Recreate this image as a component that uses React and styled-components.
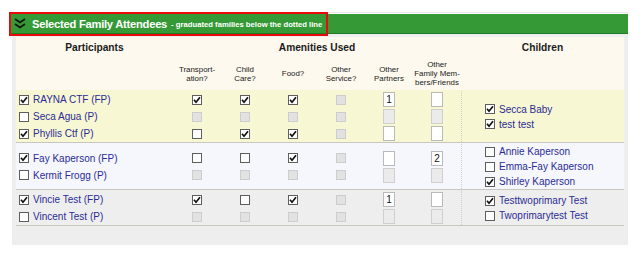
import styled, { createGlobalStyle } from "styled-components";

const GlobalStyle = createGlobalStyle`
  body {
    margin: 0;
    background: #fff;
    font-family: "Liberation Sans", Arial, sans-serif;
  }
`;

const COLS = "157px repeat(6, 48px)";

const Page = styled.div`
  padding: 12px 13px 0 10px;
  width: 618px;
`;

const Section = styled.section`
  position: relative;
`;

const TopRule = styled.div`
  height: 1px;
  background: #e6e6e6;
  margin-bottom: 1px;
`;

const Bar = styled.div`
  height: 19px;
  background: #359a35;
  border-bottom: 1px solid #237a25;
  display: flex;
  align-items: center;
  padding-left: 4px;
  color: #fff;
  white-space: nowrap;
`;

const Title = styled.span`
  margin-left: 6px;
  font-weight: bold;
  font-size: 11.2px;
  letter-spacing: -0.25px;
`;

const Subtitle = styled.span`
  margin-left: 4px;
  font-weight: bold;
  font-size: 7.7px;
  padding-top: 2px;
`;

const Highlight = styled.div`
  position: absolute;
  left: -1px;
  top: 0;
  width: 319px;
  height: 24px;
  box-sizing: border-box;
  border: 2px solid #ea0a0a;
  pointer-events: none;
`;

const Panel = styled.div`
  margin-left: 2px;
  background: #eeeeee;
  padding: 3px 4px 19px 4px;
`;

const Table = styled.div`
  width: 608px;
  background: #fdf9ee;
`;

const HeadRow = styled.div`
  display: grid;
  grid-template-columns: ${COLS} 1fr;
  height: ${(p) => p.$h}px;
  align-items: center;
  text-align: center;
`;

const ColTitle = styled.div`
  grid-column: ${(p) => p.$span || "auto"};
  font-weight: bold;
  font-size: 10.2px;
  color: #1b1b1b;
`;

const SubTitle = styled.div`
  font-size: 7.9px;
  line-height: 9px;
  color: #222;
`;

const Group = styled.div`
  display: flex;
  background: ${(p) => p.$bg};
  border-bottom: 1px solid #c7c7bf;
  padding-top: 1px;
`;

const Rows = styled.div`
  width: 445px;
  display: flex;
  flex-direction: column;
  justify-content: center;
`;

const Row = styled.div`
  display: grid;
  grid-template-columns: ${COLS};
  height: 17px;
  align-items: center;
`;

const Person = styled.label`
  display: flex;
  align-items: center;
  gap: 4px;
  padding-left: 3px;
  font-size: 10px;
  color: #2c2c94;
  white-space: nowrap;
`;

const Cell = styled.div`
  display: flex;
  justify-content: center;
  align-items: center;
`;

const Kids = styled.div`
  flex: 1;
  border-left: 1px dotted #cfcfc6;
  display: flex;
  flex-direction: column;
  justify-content: center;
  padding-left: 23px;
`;

const Kid = styled.label`
  display: flex;
  align-items: center;
  gap: 4px;
  height: 15px;
  font-size: 10px;
  color: #2c2c94;
  white-space: nowrap;
`;

const Box = styled.span`
  width: 10px;
  height: 10px;
  box-sizing: border-box;
  flex-shrink: 0;
  display: inline-flex;
  align-items: center;
  justify-content: center;
  border: 1px solid ${(p) => (p.$off ? "#cdcdcd" : "#5e5e5e")};
  background: ${(p) => (p.$off ? "#e2e2e2" : "#fff")};
`;

const Field = styled.span`
  width: 12px;
  height: 15px;
  box-sizing: border-box;
  display: inline-flex;
  align-items: center;
  justify-content: center;
  border: 1px solid ${(p) => (p.$off ? "#cfcfcf" : "#b9b9b9")};
  background: ${(p) => (p.$off ? "#ebebeb" : "#fff")};
  font-size: 10px;
  color: #111;
`;

const Chevrons = () => (
  <svg width="12" height="11" viewBox="0 0 12 11">
    <polyline points="1,1 6,4.5 11,1" fill="none" stroke="#0e1a0e" strokeWidth="1.8" />
    <polyline points="1,6 6,9.5 11,6" fill="none" stroke="#0e1a0e" strokeWidth="1.8" />
  </svg>
);

const Check = ({ on, off }) => (
  <Box $off={off}>
    {on && (
      <svg width="8" height="8" viewBox="0 0 8 8">
        <polyline points="1,3.8 3,6.2 7,1.2" fill="none" stroke="#111" strokeWidth="1.7" />
      </svg>
    )}
  </Box>
);

const subHeads = [
  ["Transport-", "ation?"],
  ["Child", "Care?"],
  ["Food?"],
  ["Other", "Service?"],
  ["Other", "Partners"],
  ["Other", "Family Mem-", "bers/Friends"],
];

const groups = [
  {
    bg: "#f7f7d3",
    people: [
      { name: "RAYNA CTF (FP)", on: true, boxes: [1, 1, 1], fields: ["1", ""] },
      { name: "Seca Agua (P)", on: false },
      { name: "Phyllis Ctf (P)", on: true, boxes: [0, 1, 1], fields: ["", ""] },
    ],
    kids: [
      ["Secca Baby", true],
      ["test test", true],
    ],
  },
  {
    bg: "#f5f7fd",
    people: [
      { name: "Fay Kaperson (FP)", on: true, boxes: [0, 0, 1], fields: ["", "2"] },
      { name: "Kermit Frogg (P)", on: false },
    ],
    kids: [
      ["Annie Kaperson", false],
      ["Emma-Fay Kaperson", false],
      ["Shirley Kaperson", true],
    ],
  },
  {
    bg: "#eeeeee",
    people: [
      { name: "Vincie Test (FP)", on: true, boxes: [1, 0, 1], fields: ["1", ""] },
      { name: "Vincent Test (P)", on: false },
    ],
    kids: [
      ["Testtwoprimary Test", true],
      ["Twoprimarytest Test", false],
    ],
  },
];

const PersonRow = ({ person }) => {
  const off = !person.on;
  const boxes = person.boxes || [0, 0, 0];
  const fields = person.fields || ["", ""];
  return (
    <Row>
      <Person>
        <Check on={person.on} />
        {person.name}
      </Person>
      {boxes.map((b, i) => (
        <Cell key={i}>
          <Check on={!!b} off={off} />
        </Cell>
      ))}
      <Cell>
        <Check off />
      </Cell>
      {fields.map((f, i) => (
        <Cell key={i}>
          <Field $off={off}>{f}</Field>
        </Cell>
      ))}
    </Row>
  );
};

export default function App() {
  return (
    <Page>
      <GlobalStyle />
      <Section>
        <TopRule />
        <Bar>
          <Chevrons />
          <Title>Selected Family Attendees</Title>
          <Subtitle>- graduated families below the dotted line</Subtitle>
        </Bar>
        <Highlight />
        <Panel>
          <Table>
            <HeadRow $h={20}>
              <ColTitle>Participants</ColTitle>
              <ColTitle $span="2 / 8">Amenities Used</ColTitle>
              <ColTitle>Children</ColTitle>
            </HeadRow>
            <HeadRow $h={33}>
              <div />
              {subHeads.map((lines, i) => (
                <SubTitle key={i}>
                  {lines.map((l, j) => (
                    <div key={j}>{l}</div>
                  ))}
                </SubTitle>
              ))}
              <div />
            </HeadRow>
            {groups.map((g, i) => (
              <Group key={i} $bg={g.bg}>
                <Rows>
                  {g.people.map((p) => (
                    <PersonRow key={p.name} person={p} />
                  ))}
                </Rows>
                <Kids>
                  {g.kids.map(([name, on]) => (
                    <Kid key={name}>
                      <Check on={on} />
                      {name}
                    </Kid>
                  ))}
                </Kids>
              </Group>
            ))}
          </Table>
        </Panel>
      </Section>
    </Page>
  );
}
